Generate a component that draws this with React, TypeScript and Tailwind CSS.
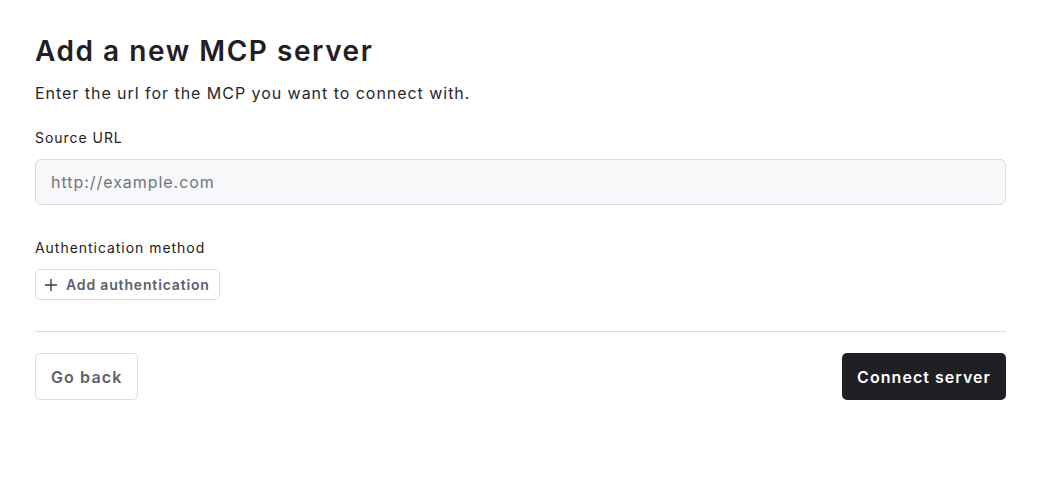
import React from "react";

export default function App() {
  return (
    <div
      className="min-h-screen bg-white text-[#1f2023] tracking-[0.06em]"
      style={{ fontFamily: "Inter, 'Liberation Sans', sans-serif" }}
    >
      <div className="w-[971px] ml-[35px] pt-[33px]">
        <h1 className="text-[28px] leading-[36px] font-semibold tracking-[0.055em] text-[#1f2023]">
          Add a new MCP server
        </h1>
        <p className="mt-[14px] text-[16px] leading-[20px] text-[#26272b]">
          Enter the url for the MCP you want to connect with.
        </p>
        <label className="block mt-[26px] text-[14px] leading-[18px] text-[#1f2023]">
          Source URL
        </label>
        <input
          className="mt-[12px] block w-full h-[46px] rounded-[6px] border border-[#d9dce2] bg-[#f7f8fa] px-[15px] text-[16px] tracking-[0.06em] text-[#1f2023] placeholder:text-[#71747c] outline-none"
          placeholder="http://example.com"
        />
        <div className="mt-[34px] text-[14px] leading-[18px] text-[#1f2023]">
          Authentication method
        </div>
        <button className="mt-[12px] flex items-center gap-[8px] h-[31px] rounded-[5px] border border-[#d9dce2] bg-white pl-[8px] pr-[9px] text-[14px] font-semibold tracking-[0.06em] text-[#5c606b]">
          <svg width="14" height="14" viewBox="0 0 14 14" fill="none">
            <path d="M7 1.5v11M1.5 7h11" stroke="#3a3c42" strokeWidth="1.4" strokeLinecap="round" />
          </svg>
          Add authentication
        </button>
        <div className="mt-[31px] h-px w-full bg-[#dcdee3]" />
        <div className="mt-[21px] flex items-center justify-between">
          <button className="h-[47px] rounded-[5px] border border-[#d9dce2] bg-white px-[15px] text-[16px] font-semibold tracking-[0.07em] text-[#5c606b]">
            Go back
          </button>
          <button className="h-[47px] rounded-[5px] bg-[#1f2023] px-[15px] text-[16px] font-semibold tracking-[0.065em] text-white">
            Connect server
          </button>
        </div>
      </div>
    </div>
  );
}
